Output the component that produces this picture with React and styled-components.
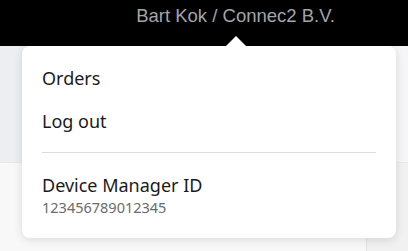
import React from 'react'
import styled, { createGlobalStyle } from 'styled-components'

const GlobalStyle = createGlobalStyle`
  html, body {
    margin: 0;
    padding: 0;
    background: #f4f4f6;
  }
  * { box-sizing: border-box; }
`

const Page = styled.div`
  position: relative;
  width: 408px;
  height: 251px;
  overflow: hidden;
  background: #f4f4f6;
`

const Header = styled.header`
  height: 46px;
  background: #000;
  display: flex;
  justify-content: flex-end;
  align-items: flex-start;
  padding: 5px 73px 0 0;
`

const UserName = styled.span`
  font-family: "Liberation Sans", Arial, sans-serif;
  font-size: 18.5px;
  color: #a3a5a8;
  line-height: 22px;
`

const Main = styled.div`
  display: flex;
  flex-direction: column;
`

const TopBand = styled.div`
  height: 116px;
  background: linear-gradient(90deg, #eceef2, #f6f6f8);
`

const LowerBand = styled.div`
  height: 89px;
  background: #f8f8f8;
  border-top: 1px solid #e9e9ec;
  display: flex;
  justify-content: flex-end;
`

const SideColumn = styled.div`
  width: 42px;
  border-left: 1px solid #e2e2e2;
  background: #f1f1f1;
`

const Dropdown = styled.div`
  position: absolute;
  top: 46px;
  left: 22px;
  width: 374px;
  height: 192px;
  background: #fff;
  border-radius: 8px;
  box-shadow: 0 2px 10px rgba(0, 0, 0, 0.12);
  padding: 15px 20px 0 20px;
  font-family: "Noto Sans", "Open Sans", sans-serif;
  color: #1b1b1b;

  &::before {
    content: '';
    position: absolute;
    top: -10px;
    left: 204px;
    border-left: 10px solid transparent;
    border-right: 10px solid transparent;
    border-bottom: 10px solid #fff;
  }
`

const MenuItem = styled.div`
  font-size: 18px;
  line-height: 24px;
  padding: 5px 0 14px;
`

const Divider = styled.hr`
  border: 0;
  border-top: 1px solid #dcdcdc;
  margin: 5px 0 20px;
`

const InfoTitle = styled.div`
  font-size: 18px;
  line-height: 24px;
`

const InfoValue = styled.div`
  font-size: 14.5px;
  line-height: 21px;
  color: #6b6b6b;
`

export default function App() {
  return (
    <>
      <GlobalStyle />
      <Page>
        <Header>
          <UserName>Bart Kok / Connec2 B.V.</UserName>
        </Header>
        <Main>
          <TopBand />
          <LowerBand>
            <SideColumn />
          </LowerBand>
        </Main>
        <Dropdown>
          <MenuItem>Orders</MenuItem>
          <MenuItem>Log out</MenuItem>
          <Divider />
          <InfoTitle>Device Manager ID</InfoTitle>
          <InfoValue>123456789012345</InfoValue>
        </Dropdown>
      </Page>
    </>
  )
}
